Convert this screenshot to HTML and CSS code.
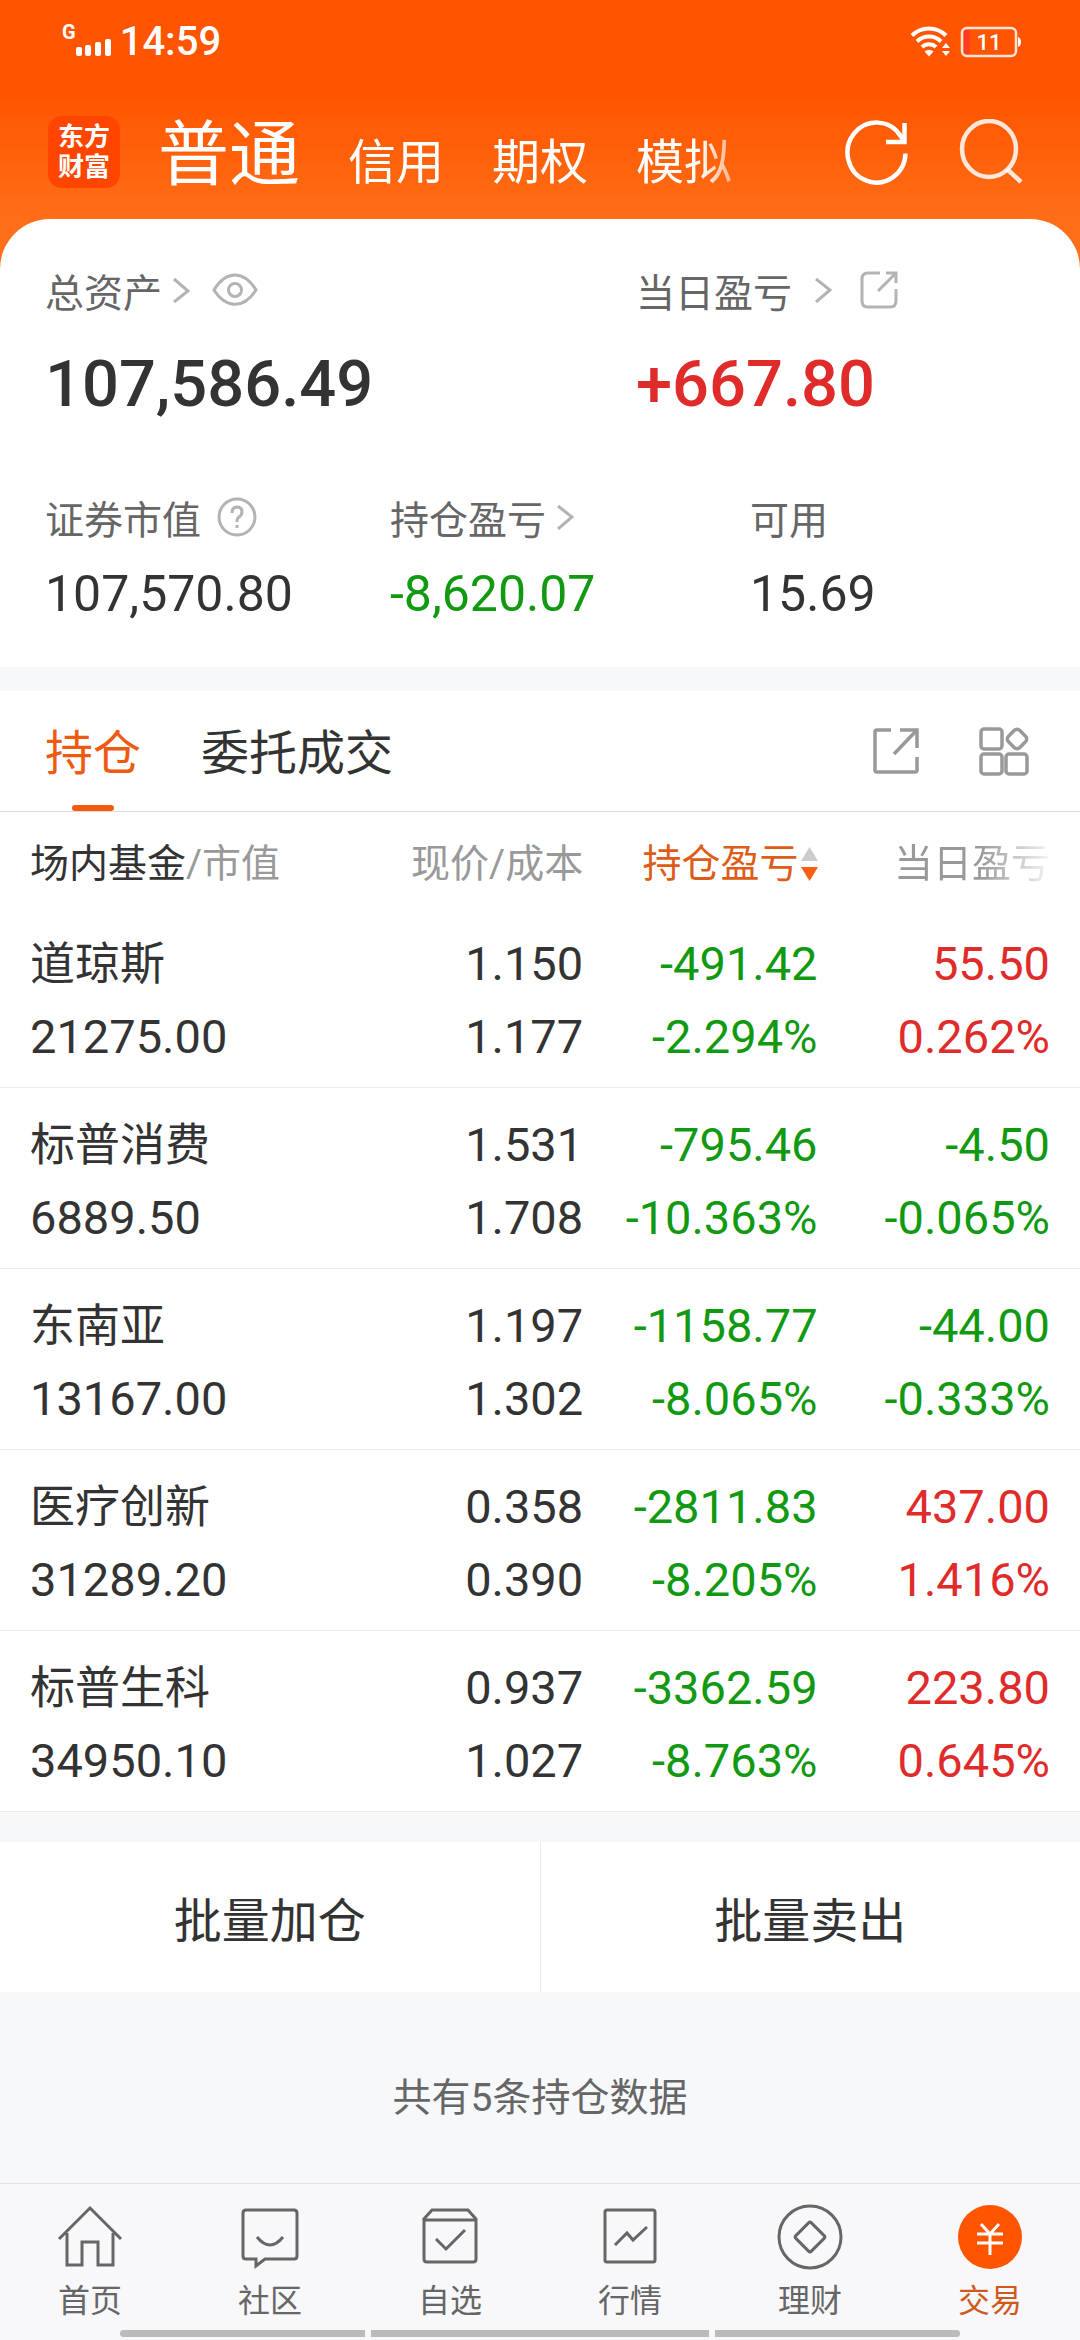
FILE: index.html
```html
<!DOCTYPE html>
<html lang="zh-CN">
<head>
  <meta charset="utf-8"/>
  <meta name="viewport" content="width=device-width"/>
  <title>交易</title>
  <link rel="stylesheet" href="styles.css">
</head>
<body>

<div class="top">
  <div class="status">
    <span class="network">G</span>
    <svg class="signal" width="36" height="20" viewBox="0 0 36 20" fill="#fff">
      <rect x="0" y="9" width="6" height="9" rx="2"/>
      <rect x="9" y="7" width="6" height="11" rx="2"/>
      <rect x="19" y="4" width="6" height="14" rx="2"/>
      <rect x="29" y="1" width="6" height="17" rx="2"/>
    </svg>
    <span class="clock">14:59</span>
    <svg class="wifi" width="40" height="32" viewBox="0 0 40 32" fill="none" stroke="#fff" stroke-width="4">
      <path d="M2 9.500a24 24 0 0 1 34 0"/>
      <path d="M7 15.500a17 17 0 0 1 24 0"/>
      <path d="M12 21a10 10 0 0 1 14 0"/>
      <path d="M14.500 25.500q4.500-3.500 9 0l-4.500 5z" fill="#fff" stroke="none"/>
      <path d="M32 22l4-5 4 5zM32 25l4 5 4-5z" fill="#fff" stroke="none"/>
    </svg>
    <svg class="battery" width="62" height="32" viewBox="0 0 62 32">
      <rect x="2" y="2" width="54" height="28" rx="5" fill="none" stroke="#fff" stroke-opacity=".85" stroke-width="2.500"/>
      <rect x="4" y="4" width="6" height="24" rx="2" fill="#ff3b26"/>
      <path d="M58 11q3 1 3 5t-3 5z" fill="#fff"/>
      <text x="29" y="24" text-anchor="middle" class="battery-text" fill="#fff">11</text>
    </svg>
  </div>

  <header class="header">
    <a href="#" class="logo">东方<br/>财富</a>
    <nav class="accounts">
      <a href="#" class="active">普通</a>
      <a href="#">信用</a>
      <a href="#">期权</a>
      <a href="#">模拟</a>
    </nav>
    <button class="icon-btn" aria-label="刷新">
      <svg width="66" height="66" viewBox="0 0 66 66" fill="none" stroke="#fff" stroke-width="4.500">
        <path d="M61.500 34.500A29 30 0 1 1 57 17.500L60 22"/>
        <path d="M60.500 4v19H42"/>
      </svg>
    </button>
    <button class="icon-btn" aria-label="搜索">
      <svg width="66" height="66" viewBox="0 0 66 66" fill="none" stroke="#fff" stroke-opacity=".85" stroke-width="4.500">
        <ellipse cx="31" cy="30" rx="27" ry="28"/>
        <path d="M49 50l14 13"/>
      </svg>
    </button>
  </header>

  <section class="card">
    <div class="totals">
      <div class="item">
        <div class="label">总资产
          <svg class="arrow" width="18" height="26" viewBox="0 0 18 26"><path d="M2 2l14 12L2 25"/></svg>
          <svg class="eye" width="46" height="34" viewBox="0 0 46 34"><path d="M2 17C14-3 32-3 44 17C32 36 14 36 2 17z"/><circle cx="23" cy="17" r="6.500"/></svg>
        </div>
        <div class="big">107,586.49</div>
      </div>
      <div class="item">
        <div class="label">当日盈亏
          <svg class="arrow spaced" width="18" height="26" viewBox="0 0 18 26"><path d="M2 2l14 11L2 25"/></svg>
          <svg class="share" width="38" height="38" viewBox="0 0 38 38"><path d="M20 2H8Q2 2 2 8V30Q2 36 8 36H30Q36 36 36 30V18M26 2H36V12M35 3L18 20"/></svg>
        </div>
        <div class="big red">+667.80</div>
      </div>
    </div>
    <div class="details">
      <div class="item">
        <div class="label">证券市值
          <svg class="help" width="40" height="40" viewBox="0 0 40 40"><circle cx="20" cy="20" r="18"/><path d="M15 16q0-6 5-6t5 5q0 3-3 5-2 1.500-2 4v1M20 28v3"/></svg>
        </div>
        <div class="value">107,570.80</div>
      </div>
      <div class="item">
        <div class="label">持仓盈亏
          <svg class="arrow" width="18" height="26" viewBox="0 0 18 26"><path d="M2 2l14 11L2 25"/></svg>
        </div>
        <div class="value green">-8,620.07</div>
      </div>
      <div class="item">
        <div class="label">可用</div>
        <div class="value">15.69</div>
      </div>
    </div>
  </section>
</div>

<main class="holdings">
  <div class="tabs">
    <a href="#" class="tab active">持仓</a>
    <a href="#" class="tab">委托成交</a>
    <button class="icon-btn" aria-label="分享">
      <svg width="50" height="50" viewBox="0 0 50 50" fill="none" stroke="#999" stroke-width="3.500">
        <path d="M20 4H6Q4 4 4 6V44Q4 46 6 46H44Q46 46 46 44V31M29 4H46V22M45 5L23 28"/>
      </svg>
    </button>
    <button class="icon-btn" aria-label="更多功能">
      <svg width="50" height="50" viewBox="0 0 50 50" fill="none" stroke="#999" stroke-width="3.500">
        <rect x="2" y="3" width="21" height="20" rx="3"/>
        <rect x="2" y="28" width="21" height="20" rx="3"/>
        <rect x="27" y="28" width="21" height="20" rx="3"/>
        <rect x="30" y="5" width="16" height="16" rx="4" transform="rotate(45 38 13)"/>
      </svg>
    </button>
  </div>

  <table class="list">
    <thead>
      <tr>
        <th class="name"><b>场内基金</b>/市值</th>
        <th class="price">现价/成本</th>
        <th class="profit">持仓盈亏<svg class="sort" width="17" height="36" viewBox="0 0 17 36"><path d="M0 15L8.500 1 17 15z" fill="#ccc"/><path d="M0 21L8.500 35 17 21z" fill="#f85f12"/></svg></th>
        <th class="today"><span class="fade">当日盈亏</span></th>
      </tr>
    </thead>
    <tbody>
      <tr>
        <td class="name"><span class="fund">道琼斯</span><br/>21275.00</td>
        <td>1.150<br/>1.177</td>
        <td class="green">-491.42<br/>-2.294%</td>
        <td class="red">55.50<br/>0.262%</td>
      </tr>
      <tr>
        <td class="name"><span class="fund">标普消费</span><br/>6889.50</td>
        <td>1.531<br/>1.708</td>
        <td class="green">-795.46<br/>-10.363%</td>
        <td class="green">-4.50<br/>-0.065%</td>
      </tr>
      <tr>
        <td class="name"><span class="fund">东南亚</span><br/>13167.00</td>
        <td>1.197<br/>1.302</td>
        <td class="green">-1158.77<br/>-8.065%</td>
        <td class="green">-44.00<br/>-0.333%</td>
      </tr>
      <tr>
        <td class="name"><span class="fund">医疗创新</span><br/>31289.20</td>
        <td>0.358<br/>0.390</td>
        <td class="green">-2811.83<br/>-8.205%</td>
        <td class="red">437.00<br/>1.416%</td>
      </tr>
      <tr>
        <td class="name"><span class="fund">标普生科</span><br/>34950.10</td>
        <td>0.937<br/>1.027</td>
        <td class="green">-3362.59<br/>-8.763%</td>
        <td class="red">223.80<br/>0.645%</td>
      </tr>
    </tbody>
  </table>

  <div class="batch">
    <button>批量加仓</button>
    <button>批量卖出</button>
  </div>
  <p class="count">共有5条持仓数据</p>
</main>

<footer class="bottom">
  <nav class="menu">
    <a href="#">
      <svg width="66" height="66" viewBox="0 0 66 66">
        <path d="M2 35L33 4 64 35M10 29V61H25V38H41V61H56V29"/>
      </svg>
      首页
    </a>
    <a href="#">
      <svg width="66" height="66" viewBox="0 0 66 66">
        <path d="M8 6H57Q60 6 60 9V52Q60 55 57 55H28L19 62V55H9Q6 55 6 52V9Q6 6 9 6M20 33Q33 49 46 33"/>
      </svg>
      社区
    </a>
    <a href="#">
      <svg width="66" height="66" viewBox="0 0 66 66">
        <path d="M6 16L15 6H51L59 15V55Q59 58 56 58H10Q7 58 7 55V16H59M19 35L29 45 48 26"/>
      </svg>
      自选
    </a>
    <a href="#">
      <svg width="66" height="66" viewBox="0 0 66 66">
        <rect x="8" y="6" width="50" height="52" rx="2"/>
        <path d="M18 41L30 29 36 36 50 23"/>
      </svg>
      行情
    </a>
    <a href="#">
      <svg width="66" height="66" viewBox="0 0 66 66">
        <circle cx="33" cy="33" r="31"/>
        <rect x="22" y="22" width="22" height="22" rx="2" transform="rotate(45 33 33)"/>
      </svg>
      理财
    </a>
    <a href="#" class="active">
      <svg width="66" height="66" viewBox="0 0 66 66">
        <circle cx="33" cy="33" r="32" fill="#f50" stroke="none"/>
        <path d="M24 20L33 30 42 20M20 30H46M20 39H46M33 30V51" stroke="#fff"/>
      </svg>
      交易
    </a>
  </nav>
  <div class="gesture"><i></i><i></i><i></i></div>
</footer>

</body>
</html>
```

FILE: styles.css
```css
* {
  box-sizing: border-box;
}
body {
  margin: 0;
  min-height: 100vh;
  display: flex;
  flex-direction: column;
  background: #f7f8fa;
  color: #333;
  font-family: Roboto, "Noto Sans CJK SC", sans-serif;
  font-size: 39px;
}
a {
  color: inherit;
  text-decoration: none;
}
button {
  border: none;
  padding: 0;
  background: none;
  color: inherit;
  font: inherit;
  cursor: pointer;
}
svg {
  display: block;
  flex: none;
}
.red {
  color: #e02b2b;
}
.green {
  color: #119911;
}

/* status bar + header */
.top {
  background: linear-gradient(#f50 96px, #ff6e18 220px);
}
.status {
  display: flex;
  align-items: center;
  height: 84px;
  padding: 0 58px 0 62px;
  color: #fff;
}
.network {
  padding-bottom: 20px;
  font-size: 20px;
  font-weight: bold;
  line-height: 24px;
}
.signal {
  margin-top: 12px;
  margin-right: 8px;
}
.clock {
  font-size: 40px;
  font-weight: 500;
  line-height: 48px;
}
.wifi {
  margin-left: auto;
  margin-right: 10px;
}
.battery-text {
  font-size: 22px;
  font-weight: 500;
}
.header {
  display: flex;
  align-items: center;
  height: 135px;
  padding: 0 56px 0 48px;
  color: #fff;
}
.logo {
  width: 72px;
  height: 72px;
  padding-top: 6px;
  border-radius: 14px;
  background: #ff4500;
  font-size: 26px;
  font-weight: bold;
  line-height: 30px;
  text-align: center;
}
.accounts {
  flex: 1;
  display: flex;
  align-items: baseline;
  gap: 48px;
  margin-left: 38px;
  padding-top: 14px;
  font-size: 48px;
  line-height: 100px;
  white-space: nowrap;
  -webkit-mask-image: linear-gradient(90deg, #000 540px, transparent 610px);
  mask-image: linear-gradient(90deg, #000 540px, transparent 610px);
}
.accounts .active {
  font-size: 71px;
}
.header .icon-btn + .icon-btn {
  margin-left: 48px;
}

/* assets */
.card {
  padding: 41px 0 43px 45px;
  border-radius: 50px 50px 0 0;
  background: #fff;
}
.totals {
  display: grid;
  grid-template-columns: 591fr 444fr;
}
.details {
  display: grid;
  grid-template-columns: 345fr 360fr 330fr;
  margin-top: 63px;
}
.label {
  display: flex;
  align-items: center;
  height: 60px;
  color: #666;
}
.label svg {
  fill: none;
  stroke: #b3b3b3;
  stroke-width: 3;
}
.arrow {
  margin-left: 10px;
}
.arrow.spaced {
  margin-left: 22px;
}
.eye {
  margin-left: 22px;
}
.share {
  margin-left: 28px;
}
.help {
  margin-left: 16px;
}
.big {
  margin-top: 24px;
  font-size: 65px;
  font-weight: 500;
  line-height: 80px;
}
.value {
  margin-top: 17px;
  font-size: 50px;
  line-height: 60px;
}

/* holdings */
.holdings {
  flex: 1;
  margin-top: 24px;
}
.tabs {
  display: flex;
  align-items: center;
  height: 121px;
  padding: 0 51px 0 45px;
  border-bottom: 1px solid #ddd;
  background: #fff;
}
.tab {
  position: relative;
  margin-right: 60px;
  padding-top: 6px;
  font-size: 48px;
  line-height: 114px;
}
.tab.active {
  color: #ee5a10;
}
.tab.active::after {
  content: "";
  position: absolute;
  left: 50%;
  bottom: 0;
  width: 42px;
  height: 6px;
  margin-left: -21px;
  border-radius: 3px;
  background: #f85a0c;
}
.tabs .icon-btn:first-of-type {
  margin-left: auto;
  margin-right: 58px;
}
.list {
  width: 100%;
  table-layout: fixed;
  border-collapse: collapse;
  background: #fff;
}
.list th {
  height: 95px;
  padding: 0;
  color: #999;
  font-weight: normal;
  text-align: right;
  white-space: nowrap;
}
.list b {
  color: #333;
  font-weight: normal;
}
.list td {
  padding: 20px 0 14px;
  border-bottom: 1px solid #ebebeb;
  font-size: 47px;
  line-height: 73px;
  text-align: right;
}
.list .name {
  width: 32%;
  padding-left: 30px;
  text-align: left;
}
.list .price {
  width: 22%;
}
.list .profit {
  width: 21.7%;
  color: #dd5c18;
}
.list .today {
  width: 24.3%;
}
.list th:last-child,
.list td:last-child {
  padding-right: 30px;
}
.fund {
  font-size: 45px;
  line-height: 1;
}
.sort {
  display: inline-block;
  margin-left: 2px;
  vertical-align: -5px;
}
.fade {
  background: linear-gradient(90deg, #999 55%, #f4f4f4);
  -webkit-background-clip: text;
  background-clip: text;
  color: transparent;
}
.batch {
  display: flex;
  margin-top: 30px;
  background: #fff;
}
.batch button {
  flex: 1;
  height: 150px;
  font-size: 48px;
}
.batch button + button {
  border-left: 1px solid #ebebeb;
}
.count {
  margin: 76px 0 50px;
  color: #666;
  line-height: 60px;
  text-align: center;
}

/* bottom menu */
.bottom {
  padding-bottom: 3px;
  border-top: 1px solid #e2e2e4;
  background: #f8f8fa;
}
.menu {
  display: flex;
  padding-top: 20px;
}
.menu a {
  flex: 1;
  display: flex;
  flex-direction: column;
  align-items: center;
  gap: 8px;
  color: #666;
  font-size: 32px;
  line-height: 46px;
}
.menu svg {
  fill: none;
  stroke: #666;
  stroke-width: 3;
}
.menu .active {
  color: #cf5a1e;
}
.gesture {
  display: grid;
  grid-template-columns: 245fr 338fr 245fr;
  gap: 6px;
  margin: 6px 120px 0;
}
.gesture i {
  height: 7px;
  background: #bbb;
}
.gesture i:first-child {
  border-radius: 4px 0 0 4px;
}
.gesture i:last-child {
  border-radius: 0 4px 4px 0;
}
```
